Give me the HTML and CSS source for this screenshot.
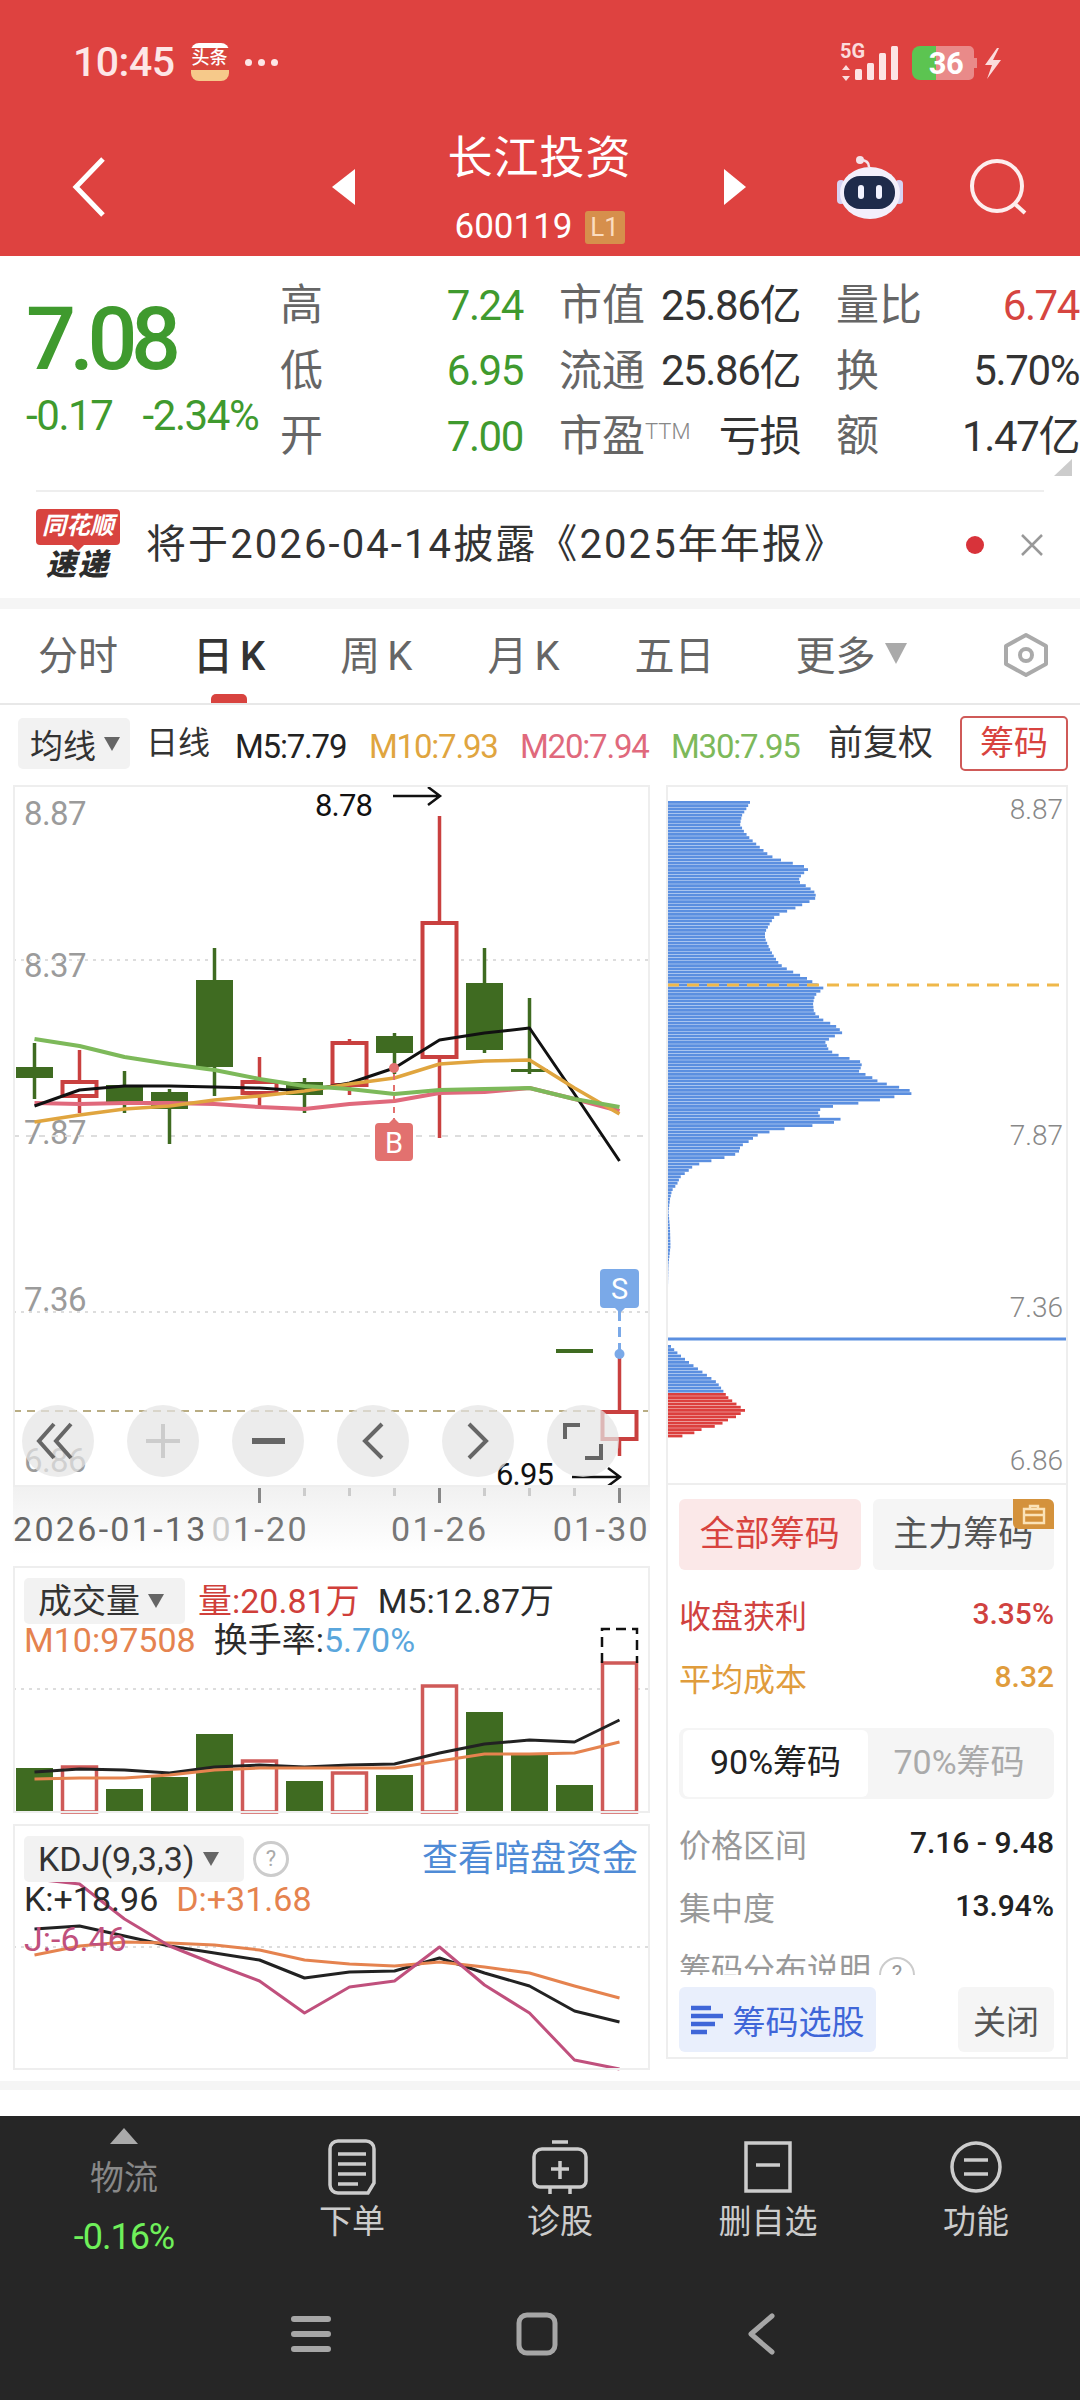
FILE: index.html
```html
<!DOCTYPE html>
<html lang="zh-CN">
<head>
<meta charset="UTF-8">
<meta name="viewport" content="width=device-width, initial-scale=1.0">
<title>长江投资 600119</title>
<link rel="stylesheet" href="styles.css">
</head>
<body>

<!-- Red header: status bar and stock title -->
<header class="top">
  <div class="status">
    <div class="status-left">
      <span class="time">10:45</span>
      <span class="news-icon"><span>头条</span></span>
      <span class="dots"><i></i><i></i><i></i></span>
    </div>
    <svg class="status-icons" viewBox="838 38 167 44" width="167" height="44">
      <text x="840" y="58" class="net">5G</text>
      <path d="M846 65l4 5h-8zM846 81l4-5h-8z" fill="#fbdcdc"/>
      <g fill="#fde4e4">
        <rect x="855" y="69" width="7" height="11" rx="1.5"/>
        <rect x="867" y="63" width="7" height="17" rx="1.5"/>
        <rect x="879" y="53" width="7" height="27" rx="1.5"/>
        <rect x="891" y="46" width="7" height="34" rx="1.5"/>
      </g>
      <path d="M936 46h33a5 5 0 0 1 5 5v7h3v10h-3v7a5 5 0 0 1-5 5h-33z" fill="#e98a89"/>
      <path d="M936 46h-16a8 8 0 0 0-8 8v18a8 8 0 0 0 8 8h16z" fill="#5cc451"/>
      <text x="946" y="74" class="batt">36</text>
      <path d="M997 48l-12 17h7l-5 14 14-19h-8l6-12z" fill="#fbdcdc"/>
    </svg>
  </div>

  <div class="titlebar">
    <svg class="back" viewBox="0 0 33 60" width="33" height="60"><path d="M31 2L4 30l27 28" fill="none" stroke="#fff" stroke-width="5"/></svg>
    <span class="tri tri-left"></span>
    <div class="stock">
      <div class="stock-name">长江投资</div>
      <div class="stock-code">600119<span class="level">L1</span></div>
    </div>
    <span class="tri tri-right"></span>
    <span></span>
    <svg class="robot" viewBox="837 152 66 66" width="66" height="66">
      <circle cx="860" cy="158" r="4" fill="#f4e3ea"/>
      <path d="M860 158q9 0 9 7" fill="none" stroke="#f4e3ea" stroke-width="2.5"/>
      <rect x="837" y="178" width="8" height="24" rx="4" fill="#d6d2f2"/>
      <rect x="895" y="178" width="8" height="24" rx="4" fill="#d6d2f2"/>
      <ellipse cx="870" cy="191" rx="30" ry="26" fill="#f3effb"/>
      <rect x="844" y="174" width="51" height="33" rx="16" fill="#1f2b4b"/>
      <rect x="858" y="183" width="6" height="14" rx="3" fill="#f3f3ff"/>
      <rect x="876" y="183" width="6" height="14" rx="3" fill="#f3f3ff"/>
    </svg>
    <span></span>
    <svg class="search" viewBox="968 158 60 60" width="60" height="60">
      <circle cx="997" cy="187" r="25" fill="none" stroke="#fdeeee" stroke-width="4"/>
      <path d="M1015 205l10 9" fill="none" stroke="#fdeeee" stroke-width="4"/>
    </svg>
  </div>
</header>

<!-- Quote block -->
<section class="quote">
  <div class="price">
    <div class="price-now">7.08</div>
    <div class="price-change"><span>-0.17</span><span>-2.34%</span></div>
  </div>
  <div class="stats">
    <div class="stat"><span class="lbl">高</span><span class="val green">7.24</span></div>
    <div class="stat"><span class="lbl">市值</span><span class="val">25.86亿</span></div>
    <div class="stat"><span class="lbl">量比</span><span class="val red">6.74</span></div>
    <div class="stat"><span class="lbl">低</span><span class="val green">6.95</span></div>
    <div class="stat"><span class="lbl">流通</span><span class="val">25.86亿</span></div>
    <div class="stat"><span class="lbl">换</span><span class="val">5.70%</span></div>
    <div class="stat"><span class="lbl">开</span><span class="val green">7.00</span></div>
    <div class="stat"><span class="lbl">市盈<small>TTM</small></span><span class="val">亏损</span></div>
    <div class="stat"><span class="lbl">额</span><span class="val">1.47亿</span></div>
  </div>
  <span class="corner"></span>
</section>

<!-- Notice -->
<section class="notice">
  <div class="notice-logo">
    <div class="logo-bubble">同花顺</div>
    <div class="logo-sub">速递</div>
  </div>
  <div class="notice-text">将于2026-04-14披露《2025年年报》</div>
  <span class="notice-dot"></span>
  <svg class="notice-close" viewBox="0 0 24 24" width="24" height="24"><path d="M2 2l20 20M22 2L2 22" stroke="#999" stroke-width="2.5"/></svg>
</section>
<div class="band"></div>

<!-- Period tabs -->
<nav class="tabs">
  <span class="tab">分时</span>
  <span class="tab tab-k active">日K</span>
  <span class="tab tab-k">周K</span>
  <span class="tab tab-k">月K</span>
  <span class="tab">五日</span>
  <span class="tab more">更多<i class="down-tri"></i></span>
  <svg class="hex" viewBox="0 0 46 44" width="46" height="44">
    <path d="M23 2l20 11v18L23 42 3 31V13z" fill="none" stroke="#aaa" stroke-width="4" stroke-linejoin="round"/>
    <circle cx="23" cy="22" r="6" fill="none" stroke="#aaa" stroke-width="4"/>
  </svg>
</nav>

<!-- MA legend -->
<div class="legend">
  <span class="chip">均线<i class="small-tri"></i></span>
  <span class="legend-dark lg-type">日线</span>
  <span class="legend-ma black lg-m5">M5:7.79</span>
  <span class="legend-ma m10 lg-m">M10:7.93</span>
  <span class="legend-ma m20 lg-m">M20:7.94</span>
  <span class="legend-ma m30 lg-m">M30:7.95</span>
  <span class="legend-dark lg-adj">前复权</span>
  <span class="chips-btn">筹码</span>
</div>

<!-- Charts -->
<main class="charts">
  <div class="col-left">
    <div class="panel panel-kline">
      <svg id="kline" viewBox="13 784 637 702" width="637" height="702">
        <g class="axis-text">
          <text x="24" y="824">8.87</text>
          <text x="24" y="976">8.37</text>
          <text x="24" y="1143">7.87</text>
          <text x="24" y="1310">7.36</text>
          <text x="24" y="1471">6.86</text>
        </g>
      </svg>
      <div class="zoom-btns">
        <span class="zoom-btn"><svg viewBox="0 0 72 72" width="72" height="72"><path d="M32 19L17 36l15 17M49 19L34 36l15 17" class="ico"/></svg></span>
        <span class="zoom-btn"><svg viewBox="0 0 72 72" width="72" height="72"><path d="M19 36h34M36 19v34" class="ico ico-off"/></svg></span>
        <span class="zoom-btn"><svg viewBox="0 0 72 72" width="72" height="72"><path d="M20 36h33" class="ico ico-thick"/></svg></span>
        <span class="zoom-btn"><svg viewBox="0 0 72 72" width="72" height="72"><path d="M45 19L28 36l17 17" class="ico"/></svg></span>
        <span class="zoom-btn"><svg viewBox="0 0 72 72" width="72" height="72"><path d="M27 19l17 17-17 17" class="ico"/></svg></span>
        <span class="zoom-btn"><svg viewBox="0 0 72 72" width="72" height="72"><path d="M18 34V20h15M54 39v14H38" class="ico"/></svg></span>
      </div>
    </div>

    <div class="date-axis">
      <svg id="ticks" viewBox="13 1486 637 18" width="637" height="18"></svg>
      <div class="date-row">
        <span class="date-first">2026-01-13</span>
        <span class="date-b"><b>0</b>1-20</span>
        <span class="date-c">01-26</span>
        <span class="date-d">01-30</span>
      </div>
    </div>

    <div class="panel panel-vol">
      <svg id="vol" viewBox="13 1565 637 247" width="637" height="247"></svg>
      <div class="sub-head">
        <div class="sub-row">
          <span class="chip chip-sub">成交量<i class="small-tri"></i></span>
          <span class="red-text">量:20.81万</span>
          <span class="dark-text">M5:12.87万</span>
        </div>
        <div class="sub-row">
          <span class="orange-text">M10:97508</span>
          <span class="dark-text">换手率:<span class="blue-text">5.70%</span></span>
        </div>
      </div>
    </div>

    <div class="panel panel-kdj">
      <svg id="kdj" viewBox="13 1823 637 246" width="637" height="246"></svg>
      <div class="sub-head">
        <div class="sub-row sub-row-kdj">
          <span class="chip chip-sub chip-kdj">KDJ(9,3,3)<i class="small-tri"></i></span>
          <span class="help">?</span>
          <span class="dark-pool">查看暗盘资金</span>
        </div>
        <div class="sub-row">
          <span class="dark-text">K:+18.96</span>
          <span class="orange-text">D:+31.68</span>
        </div>
        <div class="sub-row">
          <span class="pink-text">J:-6.46</span>
        </div>
      </div>
    </div>
  </div>

  <div class="col-right">
    <div class="panel panel-chips">
      <svg id="chips" viewBox="666 784 402 700" width="402" height="700">
        <g class="chip-axis">
          <text x="1063" y="818">8.87</text>
          <text x="1063" y="1144">7.87</text>
          <text x="1063" y="1316">7.36</text>
          <text x="1063" y="1469">6.86</text>
        </g>
      </svg>
    </div>

    <div class="chip-info">
      <div class="chip-tabs">
        <span class="chip-tab on">全部筹码</span>
        <span class="chip-tab">主力筹码
          <span class="lock">
            <svg viewBox="0 0 24 20" width="24" height="20"><path d="M8 5V2h8v3M2 5h20v14H2zM2 11h20" fill="none" stroke="#fbe3b8" stroke-width="2.4"/></svg>
          </span>
        </span>
      </div>
      <div class="info-row profit"><span>收盘获利</span><em>3.35%</em></div>
      <div class="info-row cost"><span>平均成本</span><em>8.32</em></div>
      <div class="segment">
        <span class="seg on">90%筹码</span>
        <span class="seg">70%筹码</span>
      </div>
      <div class="scroll-part">
        <div class="info-row plain"><span>价格区间</span><b>7.16 - 9.48</b></div>
        <div class="info-row plain"><span>集中度</span><b>13.94%</b></div>
        <div class="info-row plain"><span>筹码分布说明 <i class="help help-sm">?</i></span></div>
      </div>
      <div class="chip-actions">
        <span class="pick">
          <svg viewBox="0 0 32 28" width="32" height="28"><path d="M0 2h20M0 10h32M0 18h24M0 26h16" stroke="#3f66d8" stroke-width="4.5"/></svg>
          筹码选股
        </span>
        <span class="close-btn">关闭</span>
      </div>
    </div>
  </div>
</main>

<div class="band band-low"></div>
<div class="gap-white"></div>

<!-- Dark bottom bar -->
<footer class="bottom">
  <div class="actions">
    <div class="action action-first">
      <i class="up-tri"></i>
      <span class="first-name">物流</span>
      <span class="first-pct">-0.16%</span>
    </div>
    <div class="action">
      <svg viewBox="0 0 48 56" width="48" height="56"><path d="M10 2h28a8 8 0 0 1 8 8v34l-6 10H10a8 8 0 0 1-8-8V10a8 8 0 0 1 8-8zM10 15h28M10 25h28M10 35h28M10 45h20" class="nav-ico"/></svg>
      <span>下单</span>
    </div>
    <div class="action">
      <svg viewBox="0 0 56 56" width="56" height="56"><path d="M20 3h16M10 10h36a8 8 0 0 1 8 8v24a6 6 0 0 1-6 6H8a6 6 0 0 1-6-6V18a8 8 0 0 1 8-8zM18 49v6M38 49v6M28 22v18M19 30h18" class="nav-ico"/></svg>
      <span>诊股</span>
    </div>
    <div class="action">
      <svg viewBox="0 0 48 56" width="48" height="56"><path d="M2 4h44v48H2zM12 26h24" class="nav-ico"/></svg>
      <span>删自选</span>
    </div>
    <div class="action">
      <svg viewBox="0 0 52 56" width="52" height="56"><circle cx="26" cy="28" r="24" class="nav-ico"/><path d="M14 21h24M14 35h24" class="nav-ico"/></svg>
      <span>功能</span>
    </div>
  </div>
  <div class="sysnav">
    <svg viewBox="0 0 40 38" width="40" height="38"><path d="M3 4h34M3 19h34M3 34h34" stroke="#a6a6a6" stroke-width="6" stroke-linecap="round"/></svg>
    <svg viewBox="0 0 42 44" width="42" height="44"><rect x="3" y="3" width="36" height="38" rx="8" fill="none" stroke="#a6a6a6" stroke-width="5"/></svg>
    <svg class="sys-back" viewBox="0 0 28 42" width="28" height="42"><path d="M25 3L4 21l21 18" fill="none" stroke="#a6a6a6" stroke-width="5" stroke-linecap="round" stroke-linejoin="round"/></svg>
  </div>
</footer>

<script src="script.js"></script>
</body>
</html>
```

FILE: styles.css
```css
* {
  box-sizing: border-box;
}

html, body {
  margin: 0;
  padding: 0;
}

body {
  width: 1080px;
  height: 2400px;
  overflow: hidden;
  background-color: #fff;
  color: #333;
  font-family: Roboto, "Noto Sans CJK SC", sans-serif;
}

svg {
  display: block;
  overflow: visible;
}

/* header */
.top {
  height: 256px;
  background-color: #de4240;
  color: #fff;
}

.status {
  height: 124px;
  padding: 42px 0 0 73px;
  display: flex;
  justify-content: space-between;
  align-items: flex-start;
}

.status-left {
  display: flex;
  align-items: center;
  height: 40px;
}

.time {
  font-size: 41px;
  font-weight: 500;
  color: #fde6e6;
  letter-spacing: -0.5px;
}

.news-icon {
  width: 38px;
  height: 38px;
  margin-left: 16px;
  border-radius: 8px;
  background: linear-gradient(#fff 0 14%, #d8453c 14% 70%, #f6c98a 70%);
  display: flex;
  justify-content: center;
  font-size: 18px;
  line-height: 30px;
  font-weight: 500;
}

.dots {
  display: flex;
  gap: 6px;
  margin-left: 16px;
}

.dots i {
  width: 7px;
  height: 7px;
  border-radius: 50%;
  background-color: #fde6e6;
}

.status-icons {
  margin: -4px 75px 0 0;
}

.net {
  font-size: 20px;
  font-weight: 700;
  fill: #fbdcdc;
}

.batt {
  font-size: 31px;
  font-weight: 700;
  fill: #fff;
  text-anchor: middle;
  letter-spacing: -0.5px;
}

.titlebar {
  height: 132px;
  display: grid;
  grid-template-columns: 332px 23px 369px 22px 91px 66px 65px 60px;
  align-items: center;
}

.back {
  margin: -6px 0 0 72px;
}

.tri {
  width: 0;
  height: 0;
  margin-top: -6px;
  border-top: 18px solid transparent;
  border-bottom: 18px solid transparent;
}

.tri-left {
  border-right: 23px solid #fff;
}

.tri-right {
  border-left: 22px solid #fff;
}

.stock {
  text-align: center;
}

.stock-name {
  font-size: 45px;
  line-height: 52px;
  letter-spacing: 1px;
}

.stock-code {
  margin-top: 22px;
  font-size: 35px;
  line-height: 40px;
  display: flex;
  justify-content: center;
  align-items: center;
}

.level {
  width: 40px;
  height: 33px;
  margin-left: 12px;
  border-radius: 3px;
  background-color: #d68f4c;
  color: #fbdcc0;
  font-size: 26px;
  line-height: 33px;
}

.robot {
  margin-top: -6px;
}

.search {
  margin-top: -6px;
}

/* quote */
.quote {
  position: relative;
  height: 234px;
  display: flex;
  padding: 17px 0 0 26px;
}

.price {
  width: 256px;
}

.price-now {
  font-size: 88px;
  font-weight: 500;
  line-height: 88px;
  margin-top: 22px;
  letter-spacing: -6.5px;
  color: #3f9a2e;
}

.price-change {
  display: flex;
  gap: 30px;
  margin-top: 9px;
  font-size: 42px;
  line-height: 48px;
  letter-spacing: -1.4px;
  color: #3f9a2e;
  white-space: nowrap;
}

.stats {
  display: grid;
  grid-template-columns: 241px 239px 241px;
  column-gap: 38px;
  grid-auto-rows: 65.5px;
}

.stat {
  display: flex;
  justify-content: space-between;
  align-items: center;
}

.lbl {
  margin: -9px 0 0 -2px;
  font-size: 43px;
  color: #666;
}

.lbl small {
  font-size: 22px;
  font-weight: 300;
  vertical-align: 12px;
  color: #888;
}

.val {
  font-size: 42px;
  line-height: 50px;
  letter-spacing: -1.4px;
  color: #333;
}

.val.green {
  color: #3f9a2e;
}

.val.red {
  color: #d64540;
}

.corner {
  position: absolute;
  right: 8px;
  bottom: 14px;
  width: 0;
  height: 0;
  border-left: 18px solid transparent;
  border-bottom: 17px solid #ccc;
}

/* notice */
.notice {
  height: 108px;
  margin: 0 36px;
  border-top: 2px solid #eee;
  display: flex;
  align-items: center;
}

.notice-logo {
  width: 84px;
  margin-top: -2px;
  text-align: center;
}

.logo-bubble {
  position: relative;
  height: 36px;
  border-radius: 4px;
  background-color: #d8433f;
  color: #fff;
  font-size: 24px;
  font-weight: 700;
  font-style: italic;
  line-height: 35px;
  white-space: nowrap;
}

.logo-bubble::after {
  content: "";
  position: absolute;
  left: 36px;
  bottom: -6px;
  border-left: 6px solid transparent;
  border-right: 6px solid transparent;
  border-top: 6px solid #d8433f;
}

.logo-sub {
  margin-top: 5px;
  color: #2c2c2c;
  font-size: 30px;
  font-weight: 900;
  font-style: italic;
  line-height: 30px;
  letter-spacing: 2px;
}

.notice-text {
  flex: 1;
  margin: -8px 0 0 26px;
  font-size: 40px;
  letter-spacing: 2.1px;
  color: #333;
  white-space: nowrap;
}

.notice-dot {
  width: 18px;
  height: 18px;
  border-radius: 50%;
  background-color: #d8333a;
}

.notice-close {
  margin: 0 0 0 36px;
}

.band {
  height: 11px;
  background-color: #f5f5f5;
}

/* tabs */
.tabs {
  position: relative;
  height: 96px;
  padding: 0 0 6px 38px;
  border-bottom: 2px solid #e8e8e8;
  display: flex;
  gap: 75px;
  align-items: center;
}

.tab {
  font-size: 40px;
  color: #666;
}

.tab-k {
  margin-right: -7px;
  letter-spacing: 7px;
}

.tab.active {
  color: #333;
  font-weight: 500;
}

.tab.active::after {
  content: "";
  position: absolute;
  left: 211px;
  bottom: 0;
  width: 36px;
  height: 9px;
  border-radius: 5px 5px 0 0;
  background-color: #d8433f;
}

.more {
  margin-left: 6px;
  display: flex;
  align-items: center;
}

.down-tri {
  width: 0;
  height: 0;
  margin-left: 9px;
  border-left: 11px solid transparent;
  border-right: 11px solid transparent;
  border-top: 21px solid #aaa;
}

.hex {
  margin: 4px 0 0 21px;
}

/* legend */
.legend {
  height: 80px;
  padding: 13px 0 0 18px;
  display: flex;
  align-items: flex-start;
  font-size: 33px;
  white-space: nowrap;
}

.chip {
  height: 51px;
  padding: 0 0 0 12px;
  width: 112px;
  border-radius: 5px;
  background-color: #f2f2f2;
  display: flex;
  align-items: center;
  color: #333;
  font-size: 33px;
}

.small-tri {
  width: 0;
  height: 0;
  margin-left: 8px;
  border-left: 8px solid transparent;
  border-right: 8px solid transparent;
  border-top: 14px solid #666;
}

.legend-dark,
.legend-ma {
  line-height: 51px;
}

.legend-ma {
  margin-top: 3px;
  font-size: 33px;
  letter-spacing: -1.2px;
}

.legend-dark {
  color: #333;
}

.lg-type {
  width: 89px;
  margin-left: 16px;
  font-size: 32px;
}

.lg-m5 {
  width: 134px;
}

.lg-m {
  width: 151px;
}

.black {
  color: #222;
}

.m10 {
  color: #e0a53f;
}

.m20 {
  color: #e0697c;
}

.m30 {
  color: #7db95a;
}

.lg-adj {
  margin-left: 6px;
  font-size: 35px;
}

.chips-btn {
  width: 108px;
  height: 55px;
  margin: -2px 0 0 27px;
  border: 2px solid #cf5a58;
  border-radius: 5px;
  color: #d8433f;
  font-size: 34px;
  line-height: 50px;
  text-align: center;
}

/* chart area */
.charts {
  height: 1296px;
  padding-left: 13px;
  display: grid;
  grid-template-columns: 637px 402px;
  column-gap: 16px;
  align-items: start;
}

.panel {
  position: relative;
  outline: 2px solid #eee;
  outline-offset: -2px;
}

.panel-kline {
  height: 702px;
}

.axis-text text {
  font-size: 33px;
  fill: #9b9b9b;
  letter-spacing: -0.6px;
}

.zoom-btns {
  position: absolute;
  left: 9px;
  bottom: 10px;
  display: flex;
  gap: 33px;
}

.zoom-btn {
  width: 72px;
  height: 72px;
  border-radius: 50%;
  background-color: rgba(228, 228, 228, 0.72);
}

.ico {
  fill: none;
  stroke: #666;
  stroke-width: 4;
}

.ico-off {
  stroke: #ccc;
}

.ico-thick {
  stroke-width: 6;
}

.date-axis {
  height: 79px;
  background: linear-gradient(#f1f1f1, #fff 85%);
}

.date-row {
  display: flex;
  font-size: 34px;
  line-height: 40px;
  margin-top: 4px;
  letter-spacing: 2.3px;
  color: #777;
  white-space: nowrap;
}

.date-first {
  width: 199px;
  color: #666;
}

.date-b b {
  font-weight: 400;
  color: #ccc;
}

.date-b {
  width: 180px;
}

.date-c {
  width: 162px;
}

.panel-vol {
  height: 247px;
}

.panel-kdj {
  height: 246px;
  margin-top: 11px;
}

.sub-head {
  position: absolute;
  left: 11px;
  top: 12px;
  right: 12px;
  font-size: 34px;
}

.sub-row {
  display: flex;
  gap: 18px;
  align-items: center;
  white-space: nowrap;
  line-height: 44px;
}

.chip-sub {
  width: 161px;
  height: 46px;
  padding-left: 14px;
  font-size: 34px;
}

.chip-kdj {
  width: 220px;
}

.panel-vol .sub-row + .sub-row {
  margin-top: -3px;
  line-height: 38px;
}

.panel-kdj .sub-row + .sub-row {
  line-height: 40px;
}

.sub-row-kdj {
  margin-bottom: -3px;
}

.red-text {
  margin-left: -5px;
  color: #d03f3a;
}

.dark-text {
  color: #2b2b2b;
}

.orange-text {
  color: #e5834f;
}

.blue-text {
  color: #5aa6dc;
}

.pink-text {
  color: #c0507d;
}

.help {
  width: 36px;
  height: 36px;
  margin-left: -9px;
  border: 3px solid #ccc;
  border-radius: 50%;
  color: #aaa;
  font-size: 22px;
  font-style: normal;
  line-height: 30px;
  text-align: center;
}

.dark-pool {
  margin-left: auto;
  color: #4f8bd6;
  font-size: 36px;
}

/* right column */
.panel-chips {
  height: 700px;
}

.chip-axis text {
  font-size: 28px;
  font-weight: 300;
  fill: #888;
  text-anchor: end;
}

.chip-info {
  height: 574px;
  padding: 14px 12px 0 11px;
  border: 2px solid #eee;
  border-top: 0;
  color: #333;
}

.chip-tabs {
  display: flex;
  gap: 12px;
}

.chip-tab {
  position: relative;
  width: 183px;
  height: 71px;
  border-radius: 6px;
  background-color: #f5f5f5;
  color: #555;
  font-size: 35px;
  line-height: 71px;
  text-align: center;
  white-space: nowrap;
}

.chip-tab.on {
  background-color: #fbe8e8;
  color: #d8433f;
}

.lock {
  position: absolute;
  right: 0;
  top: 0;
  width: 41px;
  height: 30px;
  border-radius: 0 6px 0 6px;
  background-color: #d4923c;
  display: flex;
  align-items: center;
  justify-content: center;
}

.info-row {
  display: flex;
  justify-content: space-between;
  align-items: center;
  height: 63px;
  font-size: 32px;
}

.info-row em,
.info-row b {
  font-size: 30px;
  font-style: normal;
  font-weight: 500;
}

.profit {
  margin-top: 12px;
  color: #d0423f;
}

.cost {
  color: #e09c3c;
}

.segment {
  height: 71px;
  margin-top: 20px;
  padding: 2px 4px;
  border-radius: 8px;
  background-color: #f5f5f5;
  display: flex;
}

.seg {
  flex: 1;
  font-size: 34px;
  line-height: 65px;
  text-align: center;
  color: #aaa;
  white-space: nowrap;
}

.seg.on {
  flex: none;
  width: 185px;
  border-radius: 6px;
  background-color: #fff;
  color: #222;
}

.scroll-part {
  height: 164px;
  margin-top: 12px;
  overflow: hidden;
}

.plain {
  color: #999;
}

.plain b {
  color: #222;
}

.help-sm {
  display: inline-block;
  margin-left: 0;
  border-width: 2px;
  color: #999;
}

.chip-actions {
  display: flex;
  justify-content: space-between;
  margin-top: 12px;
}

.pick,
.close-btn {
  height: 65px;
  border-radius: 6px;
  font-size: 33px;
  display: flex;
  align-items: center;
  justify-content: center;
}

.pick {
  width: 197px;
  gap: 10px;
  background-color: #e9effc;
  color: #3f66d8;
}

.close-btn {
  width: 96px;
  background-color: #f5f5f5;
  color: #555;
}

.band-low {
  height: 9px;
}

.gap-white {
  height: 26px;
}

/* bottom */
.bottom {
  height: 285px;
  background-color: #262626;
  color: #ccc;
}

.actions {
  height: 170px;
  display: grid;
  grid-template-columns: 248px repeat(4, 208px);
}

.action {
  display: flex;
  flex-direction: column;
  align-items: center;
  padding-top: 23px;
  font-size: 33px;
  line-height: 44px;
}

.action svg {
  margin-bottom: 5px;
}

.nav-ico {
  fill: none;
  stroke: #ccc;
  stroke-width: 3.5;
}

.action-first {
  padding-top: 12px;
}

.up-tri {
  width: 0;
  height: 0;
  border-left: 14px solid transparent;
  border-right: 14px solid transparent;
  border-bottom: 16px solid #aaa;
}

.first-name {
  margin-top: 12px;
  color: #888;
  font-size: 34px;
}

.first-pct {
  margin-top: 15px;
  color: #6ff05a;
  font-size: 36px;
  letter-spacing: -1px;
}

.sysnav {
  margin-top: 26px;
  padding-right: 14.5px;
  display: flex;
  justify-content: center;
  align-items: center;
  gap: 185px;
}

.sys-back {
  margin-left: 4.5px;
}
```

FILE: script.js
```js
// Draws the charts from the price data. Values are page pixels, the svg viewBoxes match.
const NS = "http://www.w3.org/2000/svg";
const RED = "#c9403f";
const GREEN = "#3f6b21";
const xAt = i => 34.5 + i * 45;

const add = (parent, tag, attrs, text) => {
  const node = document.createElementNS(NS, tag);
  Object.keys(attrs).forEach(key => node.setAttribute(key, attrs[key]));
  if (text) node.textContent = text;
  parent.appendChild(node);
  return node;
};

const hline = (svg, y, color, dash) => {
  add(svg, "line", { x1: 13, x2: 650, y1: y, y2: y, stroke: color, "stroke-width": 2, "stroke-dasharray": dash });
};

const polyline = (svg, ys, color, width) => {
  const points = ys.map((y, i) => `${xAt(i)},${y}`).join(" ");
  add(svg, "polyline", { points, fill: "none", stroke: color, "stroke-width": width, "stroke-linejoin": "round" });
};

// K line: wick top, wick bottom, body top, body bottom, up
const candles = [
  [1042, 1098, 1066, 1077, 0],
  [1049, 1112, 1081, 1095, 1],
  [1070, 1112, 1084, 1101, 0],
  [1088, 1143, 1091, 1108, 0],
  [947, 1095, 979, 1066, 0],
  [1056, 1105, 1081, 1092, 1],
  [1077, 1112, 1081, 1094, 0],
  [1038, 1094, 1042, 1084, 1],
  [1032, 1073, 1035, 1052, 0],
  [815, 1137, 922, 1056, 1],
  [947, 1052, 982, 1049, 0],
  [997, 1073, 1068, 1071, 0],
  [1350, 1350, 1348, 1352, 0],
  [1355, 1455, 1411, 1438, 1]
];

const drawKline = () => {
  const svg = document.getElementById("kline");
  hline(svg, 959, "#ddd", "3 5");
  hline(svg, 1135, "#ddd", "6 7");
  hline(svg, 1311, "#ddd", "3 5");
  hline(svg, 1410, "#b9ad84", "8 6");

  candles.forEach((c, i) => {
    const x = xAt(i);
    const color = c[4] ? RED : GREEN;
    add(svg, "line", { x1: x, x2: x, y1: c[0], y2: c[1], stroke: color, "stroke-width": 3.5 });
    if (c[4]) {
      add(svg, "rect", { x: x - 17, y: c[2], width: 34, height: c[3] - c[2], fill: "#fff", stroke: color, "stroke-width": 4 });
    } else {
      add(svg, "rect", { x: x - 18.5, y: c[2], width: 37, height: c[3] - c[2], fill: color });
    }
  });

  polyline(svg, [1102, 1103, 1102, 1102, 1103, 1106, 1108, 1103, 1100, 1092, 1091, 1087, 1098, 1110], "#e0697c", 4);
  polyline(svg, [1105, 1089, 1085, 1085, 1086, 1087, 1090, 1082, 1067, 1039, 1032, 1027, 1093, 1160], "#111", 3);
  polyline(svg, [1121, 1114, 1108, 1105, 1099, 1095, 1090, 1083, 1077, 1063, 1060, 1059, 1087, 1113], "#e0a53f", 3.5);
  polyline(svg, [1038, 1045, 1056, 1063, 1069, 1078, 1085, 1088, 1093, 1089, 1088, 1087, 1098, 1106], "#7db95a", 4);

  // B mark
  add(svg, "line", { x1: 394, x2: 394, y1: 1073, y2: 1120, stroke: "#e2716f", "stroke-width": 2, "stroke-dasharray": "6 5" });
  add(svg, "circle", { cx: 394, cy: 1067, r: 5, fill: "#e2716f" });
  add(svg, "path", { d: "M379 1122h10l5-5 5 5h10a4 4 0 0 1 4 4v30a4 4 0 0 1-4 4h-30a4 4 0 0 1-4-4v-30a4 4 0 0 1 4-4z", fill: "#e2716f" });
  add(svg, "text", { x: 394, y: 1152, "font-size": 29, fill: "#fff", "text-anchor": "middle" }, "B");

  // S mark
  add(svg, "line", { x1: 619.5, x2: 619.5, y1: 1310, y2: 1350, stroke: "#7aa9e8", "stroke-width": 3, "stroke-dasharray": "10 6" });
  add(svg, "circle", { cx: 619.5, cy: 1353, r: 5, fill: "#7aa9e8" });
  add(svg, "path", { d: "M604 1268h31a4 4 0 0 1 4 4v31a4 4 0 0 1-4 4h-10l-5 5-5-5h-11a4 4 0 0 1-4-4v-31a4 4 0 0 1 4-4z", fill: "#7aa9e8" });
  add(svg, "text", { x: 619.5, y: 1298, "font-size": 29, fill: "#fff", "text-anchor": "middle" }, "S");

  // high and low labels
  add(svg, "text", { x: 315, y: 815, "font-size": 31, fill: "#111", "letter-spacing": -0.8 }, "8.78");
  add(svg, "path", { d: "M393 795h46M428 786l12 9-12 9", fill: "none", stroke: "#111", "stroke-width": 2.5 });
  add(svg, "text", { x: 496, y: 1484, "font-size": 31, fill: "#111", "letter-spacing": -0.8 }, "6.95");
  add(svg, "path", { d: "M572 1476h47M608 1467l12 9-12 9", fill: "none", stroke: "#111", "stroke-width": 2.5 });
};

const drawTicks = () => {
  const svg = document.getElementById("ticks");
  [5, 6, 7, 8, 9, 10, 11, 12, 13].forEach(i => {
    const major = i === 5 || i === 9 || i === 13;
    add(svg, "line", { x1: xAt(i), x2: xAt(i), y1: 1487, y2: major ? 1502 : 1495, stroke: major ? "#888" : "#ccc", "stroke-width": 3 });
  });
};

const drawVol = () => {
  const svg = document.getElementById("vol");
  hline(svg, 1688, "#ddd", "3 5");
  const tops = [1767, 1766, 1788, 1776, 1733, 1760, 1780, 1772, 1774, 1685, 1711, 1754, 1784, 1662];
  const ups = [1, 5, 7, 9, 13];
  tops.forEach((top, i) => {
    const x = xAt(i);
    if (ups.includes(i)) {
      add(svg, "rect", { x: x - 17, y: top, width: 34, height: 1811 - top, fill: "#fff", stroke: "#cf5a58", "stroke-width": 3.5 });
    } else {
      add(svg, "rect", { x: x - 18.5, y: top, width: 37, height: 1812 - top, fill: GREEN });
    }
  });
  add(svg, "path", { d: "M602 1662v-34h35v34", fill: "none", stroke: "#111", "stroke-width": 2.5, "stroke-dasharray": "10 6" });
  polyline(svg, [1771, 1768, 1769, 1772, 1766, 1764, 1766, 1764, 1763, 1752, 1743, 1739, 1741, 1719], "#222", 3);
  polyline(svg, [1778, 1777, 1777, 1774, 1769, 1767, 1767, 1767, 1767, 1760, 1753, 1753, 1752, 1741], "#e5834f", 3);
};

const drawKdj = () => {
  const svg = document.getElementById("kdj");
  hline(svg, 1946, "#ddd", "3 5");
  polyline(svg, [1928, 1925, 1935, 1945, 1952, 1959, 1977, 1971, 1970, 1957, 1972, 1985, 2010, 2021], "#222", 3);
  polyline(svg, [1954, 1945, 1941, 1942, 1944, 1949, 1959, 1963, 1965, 1961, 1966, 1972, 1985, 1997], "#e5834f", 3);
  polyline(svg, [1878, 1883, 1918, 1945, 1963, 1980, 2012, 1986, 1980, 1946, 1984, 2012, 2059, 2068], "#c0507d", 3);
};

// Chip profile: y, bar length
const profile = [
  [800, 83], [807, 79], [813, 75], [822, 73], [829, 77], [836, 83], [845, 93], [851, 100], [856, 108], [860, 123],
  [864, 137], [868, 142], [871, 136], [876, 132], [880, 133], [885, 142], [891, 149], [897, 148], [901, 138], [905, 130],
  [910, 117], [914, 108], [921, 103], [930, 98], [936, 98], [947, 103], [954, 107], [961, 112], [965, 117], [970, 127],
  [976, 140], [982, 150], [986, 157], [993, 148], [1001, 146], [1010, 147], [1017, 155], [1023, 168], [1030, 176], [1034, 167],
  [1039, 158], [1048, 162], [1053, 172], [1059, 193], [1063, 195], [1069, 192], [1075, 205], [1080, 213], [1084, 230], [1087, 238],
  [1090, 252], [1093, 233], [1097, 217], [1101, 190], [1104, 166], [1108, 150], [1114, 153], [1117, 175], [1120, 167], [1124, 140],
  [1127, 112], [1133, 90], [1139, 82], [1144, 73], [1148, 73], [1153, 67], [1156, 54], [1159, 42], [1163, 27], [1167, 23],
  [1171, 18], [1175, 13], [1182, 10], [1188, 5], [1197, 3], [1209, 1.5], [1226, 3], [1244, 3.5], [1262, 1.5], [1284, 1], [1334, 0.5]
];
const profileLow = [[1344, 4], [1352, 12], [1360, 22], [1370, 36], [1380, 50], [1391, 58], [1396, 62], [1408, 78], [1414, 70], [1418, 60], [1423, 52], [1427, 35], [1431, 26], [1433, 17], [1436, 9]];

const lengthAt = (points, y) => {
  for (let i = 1; i < points.length; i++) {
    if (y <= points[i][0]) {
      const a = points[i - 1];
      const b = points[i];
      return a[1] + (b[1] - a[1]) * (y - a[0]) / (b[0] - a[0]);
    }
  }
  return points[points.length - 1][1];
};

const drawChips = () => {
  const svg = document.getElementById("chips");
  for (let y = 800; y < 1335; y += 3.2) {
    add(svg, "rect", { x: 667, y, width: lengthAt(profile, y), height: 2.8, fill: "#5b8fe0" });
  }
  for (let y = 1344; y < 1436; y += 3.2) {
    add(svg, "rect", { x: 667, y, width: lengthAt(profileLow, y), height: 2.8, fill: y < 1392 ? "#5b8fe0" : "#dc3f3d" });
  }
  add(svg, "line", { x1: 667, x2: 1067, y1: 984, y2: 984, stroke: "#efb84a", "stroke-width": 3, "stroke-dasharray": "12 8" });
  add(svg, "line", { x1: 667, x2: 1067, y1: 1338, y2: 1338, stroke: "#5b8fe0", "stroke-width": 3 });
};

document.addEventListener("DOMContentLoaded", () => {
  drawKline();
  drawTicks();
  drawVol();
  drawKdj();
  drawChips();
});
```
